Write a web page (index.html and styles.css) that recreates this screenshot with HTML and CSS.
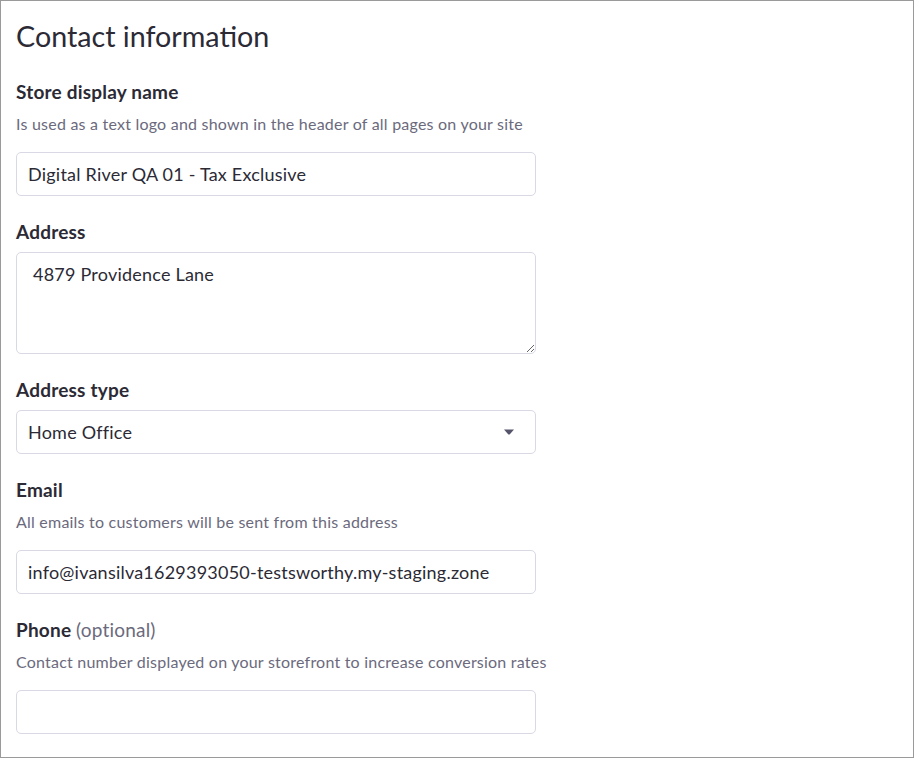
FILE: index.html
```html
<!DOCTYPE html>
<html lang="en">
<head>
<meta charset="utf-8">
<title>Contact information</title>
<link rel="stylesheet" href="styles.css">
</head>
<body>
<div class="frame">
  <h1 class="title">Contact information</h1>

  <div class="field">
    <label class="label" for="name">Store display name</label>
    <p class="help">Is used as a text logo and shown in the header of all pages on your site</p>
    <input class="input" id="name" type="text" value="Digital River QA 01 - Tax Exclusive">
  </div>

  <div class="field">
    <label class="label" for="addr">Address</label>
    <textarea class="input textarea" id="addr">4879 Providence Lane</textarea>
  </div>

  <div class="field">
    <label class="label" for="atype">Address type</label>
    <div class="select-wrap">
      <select class="input select" id="atype">
        <option>Home Office</option>
      </select>
      <svg class="caret" width="10" height="6" viewBox="0 0 10 6"><path d="M0 0.5 H10 L5.6 5.5 H4.4 Z" fill="#55546a"/></svg>
    </div>
  </div>

  <div class="field">
    <label class="label" for="email">Email</label>
    <p class="help">All emails to customers will be sent from this address</p>
    <input class="input" id="email" type="text" value="info@ivansilva1629393050-testsworthy.my-staging.zone">
  </div>

  <div class="field">
    <label class="label" for="phone">Phone <span class="optional">(optional)</span></label>
    <p class="help">Contact number displayed on your storefront to increase conversion rates</p>
    <input class="input" id="phone" type="text" value="">
  </div>
</div>
</body>
</html>
```

FILE: styles.css
```css
* { box-sizing: border-box; }
html, body { margin: 0; padding: 0; background: #ffffff; }
body {
  font-family: "Lato", "Liberation Sans", sans-serif;
  color: #2b2a35;
}
.frame {
  height: 100vh;
  border: 1px solid #9a9a9a;
  padding: 17px 15px 0;
  overflow: hidden;
}
.title {
  margin: 0 0 26px;
  font-size: 28.7px;
  line-height: 36px;
  font-weight: 400;
  color: #2b2a35;
}
.field {
  display: flex;
  flex-direction: column;
  align-items: flex-start;
  margin-bottom: 24px;
}
.label {
  font-size: 19px;
  line-height: 24px;
  font-weight: 700;
  letter-spacing: 0.2px;
  color: #2b2a35;
  margin-bottom: 8px;
}
.optional {
  font-weight: 400;
  color: #6b6a7d;
}
.help {
  margin: 0 0 16px;
  font-size: 16px;
  line-height: 24px;
  letter-spacing: 0.22px;
  color: #6b6a7d;
}
.input {
  width: 520px;
  height: 44px;
  border: 1px solid #d9d9e6;
  border-radius: 5px;
  padding: 0 11px;
  font-family: inherit;
  font-size: 18px;
  letter-spacing: 0.22px;
  color: #2b2a35;
  background: #fff;
  outline: none;
}
.textarea {
  height: 102px;
  padding: 9px 16px;
  line-height: 24px;
  resize: vertical;
}
.select-wrap {
  position: relative;
}
.select {
  appearance: none;
  -webkit-appearance: none;
  display: block;
}
.caret {
  position: absolute;
  right: 22px;
  top: 19px;
  pointer-events: none;
}
```
